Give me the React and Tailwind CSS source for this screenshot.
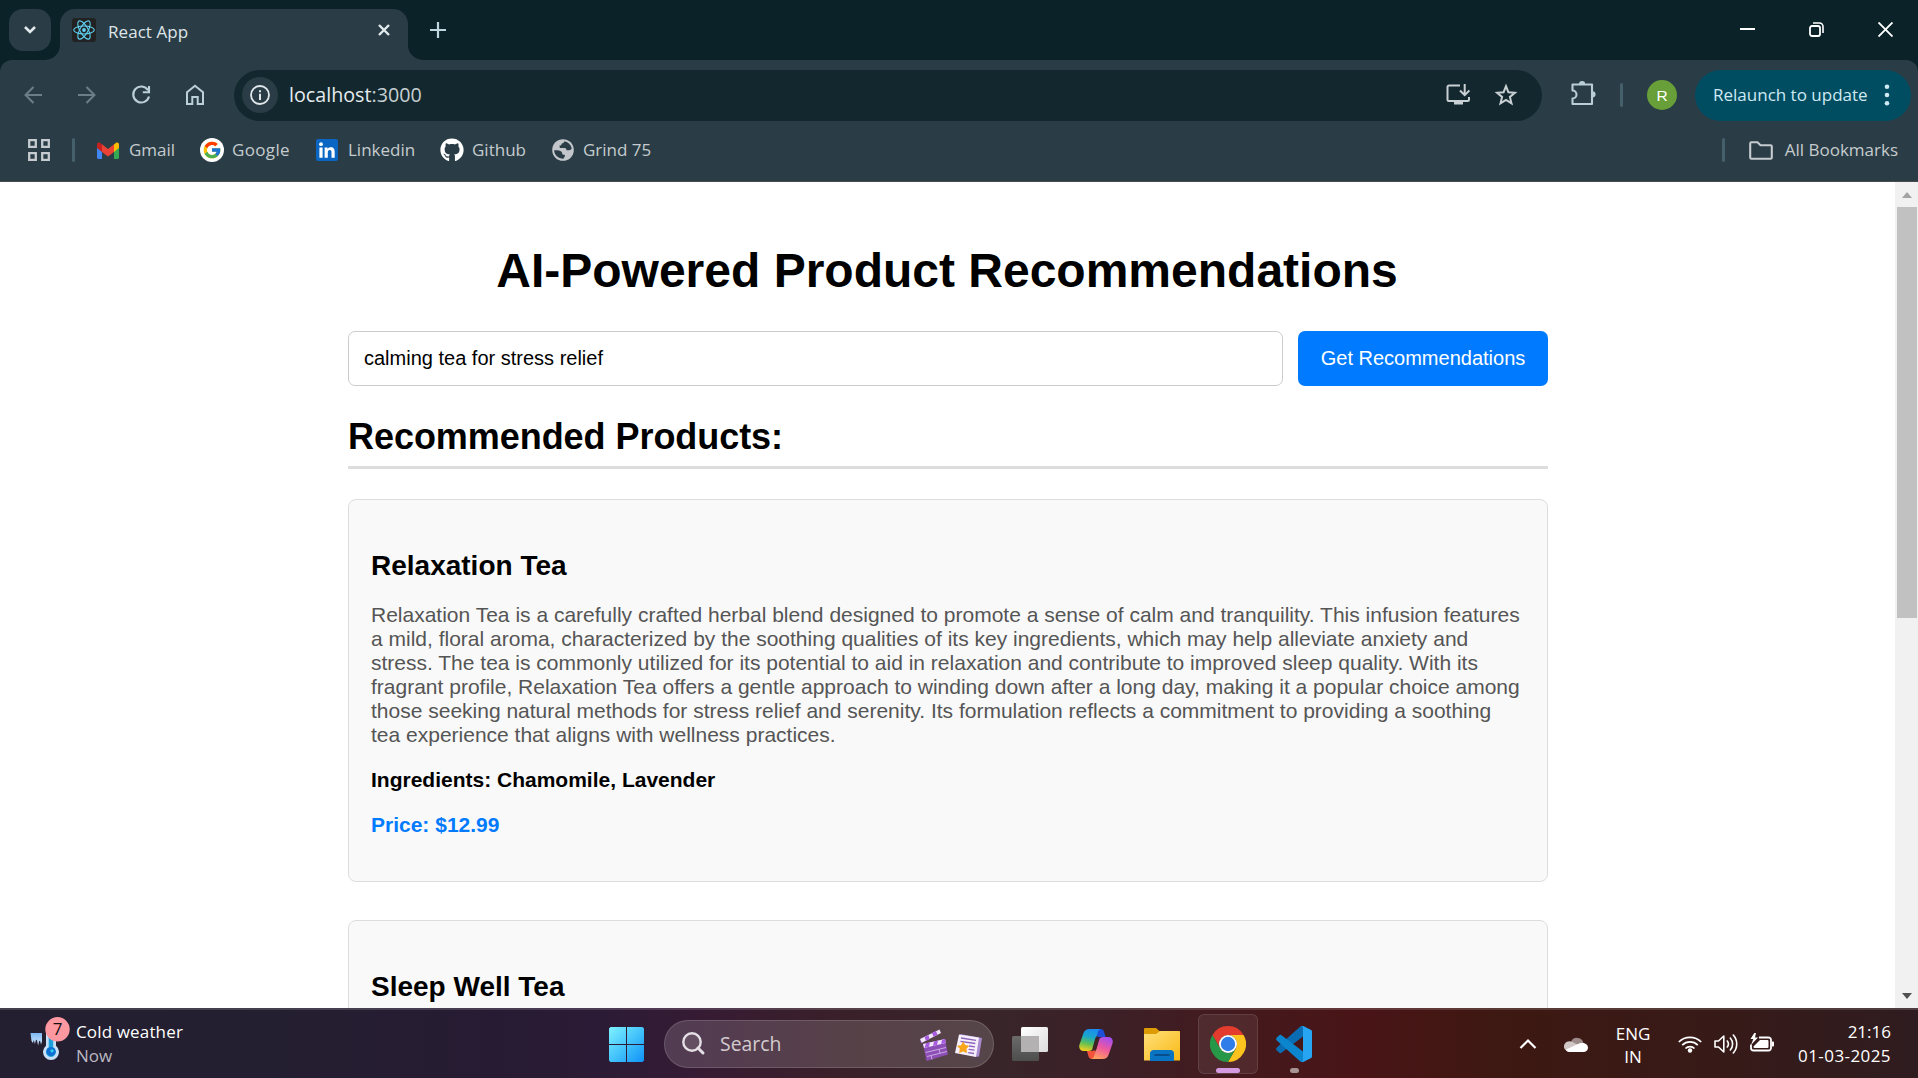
import React from 'react';
import { FcGoogle } from 'react-icons/fc';
import { FaGithub } from 'react-icons/fa';

function Icon({ w = 24, h = 24, className = '', children }) {
  return (
    <svg width={w} height={h} viewBox={`0 0 ${w} ${h}`} fill="none" className={`shrink-0 ${className}`}>
      {children}
    </svg>
  );
}

/* ---------- Browser tab strip ---------- */

function ReactLogo() {
  return (
    <Icon className="rounded-[3px] bg-[#222222]">
      <g stroke="#5ed3f3" strokeWidth="1.1">
        <ellipse cx="12" cy="12" rx="10.3" ry="4" />
        <ellipse cx="12" cy="12" rx="10.3" ry="4" transform="rotate(60 12 12)" />
        <ellipse cx="12" cy="12" rx="10.3" ry="4" transform="rotate(120 12 12)" />
      </g>
      <circle cx="12" cy="12" r="1.9" fill="#5ed3f3" />
    </Icon>
  );
}

function TabStrip() {
  return (
    <div className="flex h-[60px] items-start bg-[#0b2229]">
      <button className="mt-[9px] ml-[9px] flex h-[42px] w-[42px] items-center justify-center rounded-[14px] bg-[#2a3d46]">
        <Icon w={14} h={10}>
          <path d="M2 2l5 5 5-5" stroke="#e3e9ec" strokeWidth="2.6" />
        </Icon>
      </button>
      <div className="relative mt-[9px] ml-[9px] flex h-[51px] w-[348px] items-center rounded-t-[15px] bg-[#2a3d46] pb-[9px] pl-[12px]">
        <Icon w={15} h={15} className="absolute bottom-0 -left-[15px]">
          <path d="M15 0v15H0A15 15 0 0 0 15 0z" fill="#2a3d46" />
        </Icon>
        <Icon w={15} h={15} className="absolute -right-[15px] bottom-0">
          <path d="M0 0v15h15A15 15 0 0 1 0 0z" fill="#2a3d46" />
        </Icon>
        <ReactLogo />
        <span className="mt-[3px] ml-[12px] grow leading-6 tracking-[0.05px] text-[#dfe6e9]">React App</span>
        <Icon w={12} h={12} className="mr-[18px]">
          <path d="M1 1l10 10M11 1L1 11" stroke="#e3e9ec" strokeWidth="2.4" />
        </Icon>
      </div>
      <Icon w={16} h={16} className="mt-[22px] ml-[22px]">
        <path d="M8 0v16M0 8h16" stroke="#bfd6df" strokeWidth="2.2" />
      </Icon>
      <div className="mt-[22px] mr-[25px] ml-auto flex gap-[54px]">
        <Icon w={15} h={15}>
          <path d="M0 7h15" stroke="#fff" strokeWidth="2" />
        </Icon>
        <Icon w={15} h={15}>
          <rect x="1" y="4" width="10" height="10" rx="2" stroke="#fff" strokeWidth="1.8" />
          <path d="M4 1h6.500a3.500 3.500 0 0 1 3.500 3.500V11" stroke="#fff" strokeWidth="1.6" />
        </Icon>
        <Icon w={15} h={15}>
          <path d="M.5.5l14 14M14.500.5l-14 14" stroke="#fff" strokeWidth="1.9" />
        </Icon>
      </div>
    </div>
  );
}

/* ---------- Toolbar ---------- */

function Toolbar() {
  return (
    <div className="flex h-[69px] items-center pt-[1px] pl-[24px]">
      <Icon w={18} h={18}>
        <path d="M18 9H1.500M9.500 1L1.500 9l8 8" stroke="#6c7f88" strokeWidth="2" />
      </Icon>
      <Icon w={18} h={18} className="ml-[36px]">
        <path d="M0 9h16.500M8.500 1l8 8-8 8" stroke="#6c7f88" strokeWidth="2" />
      </Icon>
      <Icon w={20} h={20} className="ml-[35px]">
        <path d="M17 5.200A8 8 0 1 0 18 11.500" stroke="#bcd0d9" strokeWidth="2.1" />
        <path d="M18 1v6.200h-6.200" stroke="#bcd0d9" strokeWidth="2.1" />
      </Icon>
      <Icon w={20} h={22} className="ml-[34px]">
        <path d="M2 8.200L10 1.700l8 6.500V20h-5.300v-7H7.300v7H2z" stroke="#bcd0d9" strokeWidth="2" />
      </Icon>
      <div className="ml-[29px] flex h-[51px] w-[1308px] items-center rounded-full bg-[#13282e] pr-[24px] pl-[8px]">
        <div className="flex h-9 w-9 items-center justify-center rounded-full bg-[#2a3d46]">
          <Icon w={20} h={20}>
            <circle cx="10" cy="10" r="9" stroke="#e1e7ea" strokeWidth="1.8" />
            <path d="M10 8.800V15M10 5.200v2" stroke="#e1e7ea" strokeWidth="2" />
          </Icon>
        </div>
        <span className="-mt-[1px] ml-[11px] grow text-[19.7px] leading-7 text-[#e6ecee]">
          localhost<span className="text-[#c7cfd2]">:3000</span>
        </span>
        <Icon w={24} h={22}>
          <path d="M14 1.500H3A1.500 1.500 0 0 0 1.500 3v12.500A1.500 1.500 0 0 0 3 17h18.500a1.500 1.500 0 0 0 1.500-1.500V13" stroke="#c9d0d3" strokeWidth="2" />
          <path d="M8 17.500h9V20.500H8z" fill="#c9d0d3" />
          <path d="M18.700 0v11M14 6.500l4.700 4.700 4.700-4.700" stroke="#c9d0d3" strokeWidth="2" />
        </Icon>
        <Icon w={24} h={24} className="ml-[24px]">
          <path d="M12 3.200l2.400 6 6.500.5-5 4.200 1.600 6.400L12 16.900l-5.500 3.400 1.600-6.400-5-4.200 6.500-.5z" stroke="#c9d0d3" strokeWidth="2" />
        </Icon>
      </div>
      <Icon w={26} h={26} className="-mt-[4px] ml-[28px]">
        <path d="M2.500 4.500h19.500v19.500H2.500v-5.500a4 4 0 0 0 0-8z" stroke="#b9ced7" strokeWidth="2.1" strokeLinejoin="round" />
        <path d="M9 4a3.100 3.100 0 0 1 6.200 0zM22.500 11.200a3 3 0 0 1 0 6.200z" fill="#b9ced7" />
      </Icon>
      <div className="ml-[24px] h-6 w-[3px] rounded-full bg-[#46606b]" />
      <div className="ml-[24px] flex h-[30px] w-[30px] items-center justify-center rounded-full bg-[#689f38] pt-px font-['Liberation_Sans',Arial,sans-serif] text-[15.5px] text-white">
        R
      </div>
      <div className="ml-[18px] flex h-[51px] w-[216px] items-center rounded-full bg-[#004d61] pl-[18px]">
        <span className="leading-6 whitespace-nowrap text-[#cfe9f3]">Relaunch to update</span>
        <Icon w={6} h={22} className="mr-[21px] ml-auto">
          <g fill="#cfe9f3">
            <circle cx="3" cy="2.700" r="2.300" />
            <circle cx="3" cy="11" r="2.300" />
            <circle cx="3" cy="19.300" r="2.300" />
          </g>
        </Icon>
      </div>
    </div>
  );
}

/* ---------- Bookmarks ---------- */

function GmailLogo() {
  return (
    <Icon w={22} h={17}>
      <path d="M0 3v12.500A1.500 1.500 0 0 0 1.500 17H5V7z" fill="#4285f4" />
      <path d="M22 3v12.500a1.500 1.500 0 0 1-1.500 1.500H17V7z" fill="#34a853" />
      <path d="M17 2.500l2-1.700c1.300-1 3 0 3 1.600V6l-5 4z" fill="#fbbc04" />
      <path d="M0 2.400C0 .8 1.700-.2 3 .8l2 1.700V10L0 6z" fill="#c5221f" />
      <path d="M5 2.300l6 4.600 6-4.600V10l-6 4.600L5 10z" fill="#ea4335" />
    </Icon>
  );
}

function LinkedinLogo() {
  return (
    <Icon w={22} h={22} className="rounded-[2px] bg-[#0a66c2]">
      <g fill="#fff">
        <circle cx="5" cy="5.200" r="1.900" />
        <path d="M3.400 8.400h3.200V18.700H3.400zM8.600 8.400h3v1.500c.6-1 1.700-1.700 3.100-1.700 3.200 0 4 2 4 5v5.500h-3.200v-5c0-1.400-.2-2.600-1.700-2.600s-2 1.100-2 2.600v5H8.600z" />
      </g>
    </Icon>
  );
}

function GlobeIcon() {
  return (
    <Icon w={22} h={22}>
      <circle cx="11" cy="11" r="10.800" fill="#c3c7cc" />
      <path d="M12.500 2.200c-.2 1.300-1.200 2-2.700 2.200-.3 1.500-1 2.100-2.300 2.200L7.800 9h4.700c1.500.1 2 1 2 2.300h2.600c1.300 0 2-.8 2.600-1.700C19.300 6 16.300 3 12.500 2.200zM2.200 11.200c2.800-.1 5.600 0 7.300 1.600.8.9.6 2.200 1.200 2.700.8.5 2.300.1 2.300 1.200 0 1.200-1.300 1.700-1.600 3C6.500 19.800 2.200 16.200 2.200 11.200z" fill="#2a3d46" />
    </Icon>
  );
}

function Bookmark({ icon, label, className }) {
  return (
    <div className={`flex items-center ${className}`}>
      {icon}
      <span className="leading-6 text-[#c5cbce]">{label}</span>
    </div>
  );
}

function BookmarksBar() {
  return (
    <div className="flex h-[53px] items-center border-b border-[#4a4a4d] pb-[10px] pl-[28px]">
      <Icon w={22} h={22}>
        <path d="M1.200 1.200h6.600v6.600H1.200zM14.200 1.200h6.600v6.600h-6.600zM1.200 14.200h6.600v6.600H1.200zM14.200 14.200h6.600v6.600h-6.600z" stroke="#c5cbce" strokeWidth="2.300" />
      </Icon>
      <div className="ml-[22px] h-6 w-[3px] rounded-full bg-[#46606b]" />
      <Bookmark className="ml-[22px] w-[103px] gap-[10px]" icon={<GmailLogo />} label="Gmail" />
      <Bookmark
        className="w-[116px] gap-[8px]"
        icon={
          <span className="flex h-6 w-6 items-center justify-center rounded-full bg-white">
            <FcGoogle size={20} />
          </span>
        }
        label={<span className="tracking-[0.35px]">Google</span>}
      />
      <Bookmark className="w-[124px] gap-[10px]" icon={<LinkedinLogo />} label="Linkedin" />
      <Bookmark className="w-[112px] gap-[8px]" icon={<FaGithub size={24} color="#fff" />} label="Github" />
      <Bookmark className="gap-[9px]" icon={<GlobeIcon />} label="Grind 75" />
      <div className="ml-auto h-6 w-[3px] rounded-full bg-[#46606b]" />
      <Icon w={24} h={19} className="ml-[24px]">
        <path d="M1.200 2.500c0-.8.500-1.300 1.300-1.300H8.500l3 3h10c.8 0 1.300.5 1.300 1.300v11c0 .8-.5 1.300-1.300 1.300H2.500c-.8 0-1.300-.5-1.300-1.300z" stroke="#c5cbce" strokeWidth="2.100" />
      </Icon>
      <span className="mr-[20px] ml-[12px] leading-6 text-[#c5cbce]">All Bookmarks</span>
    </div>
  );
}

/* ---------- Page ---------- */

function ProductCard({ name, description, ingredients, price }) {
  return (
    <article className="mb-[38px] rounded-[8px] border border-[#dddddd] bg-[#f9f9f9] px-[22px] pt-[50px] pb-[44px] text-[21px] leading-6">
      <h3 className="mb-[21px] text-[28px] leading-8 font-bold">{name}</h3>
      <p className="mb-[21px] text-[#555555]">{description}</p>
      <p className="mb-[21px] font-bold">Ingredients: {ingredients}</p>
      <p className="font-bold text-[#007bff]">Price: {price}</p>
    </article>
  );
}

const products = [
  {
    name: 'Relaxation Tea',
    description:
      'Relaxation Tea is a carefully crafted herbal blend designed to promote a sense of calm and tranquility. This infusion features a mild, floral aroma, characterized by the soothing qualities of its key ingredients, which may help alleviate anxiety and stress. The tea is commonly utilized for its potential to aid in relaxation and contribute to improved sleep quality. With its fragrant profile, Relaxation Tea offers a gentle approach to winding down after a long day, making it a popular choice among those seeking natural methods for stress relief and serenity. Its formulation reflects a commitment to providing a soothing tea experience that aligns with wellness practices.',
    ingredients: 'Chamomile, Lavender',
    price: '$12.99',
  },
];

function Page() {
  return (
    <div className="flex h-[826px] bg-white">
      <main className="grow overflow-hidden pl-[348px] font-['Liberation_Sans',Arial,sans-serif] text-black">
        <div className="w-[1200px]">
          <h1 className="mt-[61px] pr-[2px] text-center text-[48px] leading-[55px] font-bold">AI-Powered Product Recommendations</h1>
          <div className="mt-[33px] flex h-[55px] gap-[15px] text-[20px]">
            <div className="flex grow items-center rounded-[7px] border border-[#cccccc] pb-[2px] pl-[15px]">calming tea for stress relief</div>
            <button className="w-[250px] rounded-[7px] bg-[#007bff] pb-[2px] text-white">Get Recommendations</button>
          </div>
          <h2 className="mt-[30px] mb-[30px] border-b-[3px] border-[#dddddd] pb-[9px] text-[36px] leading-[41px] font-bold tracking-[-0.05px]">
            Recommended Products:
          </h2>
          {products.map((p) => (
            <ProductCard key={p.name} {...p} />
          ))}
          <article className="h-[383px] rounded-[8px] border border-[#dddddd] bg-[#f9f9f9] px-[22px] pt-[50px]">
            <h3 className="text-[28px] leading-8 font-bold">Sleep Well Tea</h3>
          </article>
        </div>
      </main>
      <div className="flex w-[23px] flex-col items-center bg-[#f1f1f1]">
        <Icon w={10} h={6} className="mt-[10px] mb-[9px]">
          <path d="M5 0l5 6H0z" fill="#a3a3a3" />
        </Icon>
        <div className="h-[411px] w-[20px] bg-[#c1c1c1]" />
        <Icon w={10} h={6} className="mt-auto mb-[9px]">
          <path d="M0 0h10L5 6z" fill="#505050" />
        </Icon>
      </div>
    </div>
  );
}

/* ---------- Taskbar ---------- */

function Weather() {
  return (
    <div className="flex w-[579px] items-start pl-[30px]">
      <Icon w={40} h={46} className="mt-[7px]">
        <defs>
          <linearGradient id="ice" x1="0" y1="0" x2="0" y2="1">
            <stop stopColor="#7db7f3" />
            <stop offset="1" stopColor="#d5e8fb" />
          </linearGradient>
        </defs>
        <path d="M.5 16h11.500v8.500l-1 3-1-4-1 1-.9 4-1.300-6-1 1-.9 3.500-1-4-1 3-1.400-2z" fill="url(#ice)" />
        <path d="M16 14h10v14.700a8 8 0 1 1-10 0z" fill="#c7dff7" />
        <path d="M18.700 14h4.500v16.500a5 5 0 1 1-4.500 0z" fill="#1ba2dc" />
        <circle cx="21" cy="34.500" r="4.600" fill="#0f6fd0" />
        <circle cx="22" cy="33.800" r="1.600" fill="#2fd0f0" />
        <circle cx="27.500" cy="12.300" r="12.200" fill="#fd98a1" />
        <text x="27.500" y="18.200" textAnchor="middle" fontSize="17" fontFamily="Open Sans" fill="#111">7</text>
      </Icon>
      <div className="mt-[10px] ml-[6px] leading-6">
        <div className="tracking-[0.15px] text-white">Cold weather</div>
        <div className="text-[#b9b8c0]">Now</div>
      </div>
    </div>
  );
}

function SearchBox() {
  return (
    <div className="mr-[18px] ml-[20px] flex h-[48px] w-[330px] items-center rounded-full border border-white/15 bg-white/15 pr-[10px] pl-[17px]">
      <Icon w={24} h={24}>
        <circle cx="10" cy="10" r="8.700" stroke="#e4dfe4" strokeWidth="2.400" fill="#fff" fillOpacity=".1" />
        <path d="M16 16l5 5" stroke="#e4dfe4" strokeWidth="3" strokeLinecap="round" />
      </Icon>
      <span className="ml-[14px] grow text-[19.4px] leading-7 text-[#d2cccf]">Search</span>
      <Icon w={30} h={34} className="mt-[2px]">
        <path d="M1 11L20.500 1.500l1.500 3.500L2.500 15z" fill="#f2e6fc" />
        <path d="M5.500 9l4-2 1 4-3.500 2zM13 5l4-2 1.500 3.800-4 2zM1 11l2 4-.8.300z" fill="#a75be0" />
        <path d="M4 16l22-5 3 15.500L7.500 33z" fill="#8d4fb5" />
        <path d="M4 16l22-5 .7 4L5 20z" fill="#f2e6fc" />
        <path d="M7 15.300l4-1-1 4.500-4.500 1zM15 13.500l4-1-1 4.500-4 1zM23 11.700l3-.7.700 4-4.500 1z" fill="#a75be0" />
        <path d="M6.500 24.500l20.500-5M8 28.500l20-5M20 21.300l1 4M12 27.500l1 4" stroke="#c9a9e3" strokeWidth="1" />
      </Icon>
      <Icon w={28} h={28} className="mt-[3px] ml-[6px]">
        <path d="M5 2l22 4-3 18.500-4 .500z" fill="#a98bd0" />
        <path d="M4 2.500l20 3-3 19.500-21-4z" fill="#f5eefb" />
        <path d="M6 6l15 2.300M5.500 9.300l14.800 2.200M14 14l6 .9M13.700 17.300l5.800.9M13.200 20.600l5.800.9" stroke="#8b63b8" strokeWidth="1.300" />
        <path d="M8.200 10.500l1.600 3 3.400.500-2.400 2.600.500 3.700-3.200-1.500-3.300 1.500.7-3.600-2.500-2.500 3.500-.4z" fill="#f9a51a" stroke="#f9a51a" strokeWidth="1.200" strokeLinejoin="round" />
      </Icon>
    </div>
  );
}

function StartIcon() {
  return (
    <Icon w={35} h={35}>
      <defs>
        <linearGradient id="win" gradientUnits="userSpaceOnUse" x1="0" y1="0" x2="35" y2="35">
          <stop stopColor="#7ff2ff" />
          <stop offset=".5" stopColor="#45c4fb" />
          <stop offset="1" stopColor="#0f92f7" />
        </linearGradient>
      </defs>
      <path d="M1.500 0H17v17H0V1.500zM18 0h15.500L35 1.500V17H18zM0 18h17v17H1.500L0 33.500zM18 18h17v15.500L33.500 35H18z" fill="url(#win)" />
    </Icon>
  );
}

function TaskViewIcon() {
  return (
    <Icon w={36} h={34}>
      <defs>
        <linearGradient id="tvFront" x1="0" y1="0" x2="1" y2="1">
          <stop stopColor="#fff" />
          <stop offset="1" stopColor="#dcdcdc" />
        </linearGradient>
        <linearGradient id="tvBack" x1="0" y1="0" x2="0" y2="1">
          <stop stopColor="#6b6b6b" />
          <stop offset="1" stopColor="#4d4d4d" />
        </linearGradient>
      </defs>
      <rect x="0" y="9" width="27" height="25" rx="1.500" fill="url(#tvBack)" />
      <rect x="9" y="0" width="27" height="25" rx="1.500" fill="url(#tvFront)" />
      <path d="M9 9h18v16H9z" fill="#b3b1b1" />
    </Icon>
  );
}

function CopilotIcon() {
  return (
    <Icon w={34} h={32}>
      <defs>
        <linearGradient id="cpL" x1="0.500" y1="0" x2="0.300" y2="1">
          <stop stopColor="#1b8df0" />
          <stop offset=".35" stopColor="#1aa6c8" />
          <stop offset=".65" stopColor="#5cbf57" />
          <stop offset="1" stopColor="#f6cf1c" />
        </linearGradient>
        <linearGradient id="cpR" x1="0.700" y1="0" x2="0.300" y2="1">
          <stop stopColor="#a54df0" />
          <stop offset=".5" stopColor="#ee5a9c" />
          <stop offset="1" stopColor="#ffa05e" />
        </linearGradient>
      </defs>
      <path d="M17 1h4.500c2 0 3 1 3.500 2.800L26.700 9H22c-2.500 0-3.500 1.500-4.200 3.500z" fill="#1d4fd8" />
      <path d="M17 31h-4c-2 0-3-1-3.500-2.800L8 23h4.500c2.500 0 3-1.500 3.800-3.500z" fill="#f4523b" />
      <path d="M10.500 1H22c-2 .3-2.800 2-3.400 4L14 20c-.8 2.300-2 3-4.200 3H5c-4 0-5.500-3-4.500-6.500L4.300 5.500C5.300 2.500 7.300 1 10.500 1z" fill="url(#cpL)" />
      <path d="M23.500 31H12c2-.3 2.800-2 3.400-4L20 12c.8-2.300 2-3 4.200-3H29c4 0 5.500 3 4.500 6.500l-3.800 11c-1 3-3 4.500-6.200 4.500z" fill="url(#cpR)" />
      <path d="M18.300 10.500L15.500 20.500" stroke="#3d2326" strokeWidth="4" strokeLinecap="round" />
    </Icon>
  );
}

function FolderIcon() {
  return (
    <Icon w={36} h={33}>
      <defs>
        <linearGradient id="fold" x1="0" y1="0" x2="1" y2="1">
          <stop stopColor="#ffe07a" />
          <stop offset="1" stopColor="#f9b916" />
        </linearGradient>
      </defs>
      <path d="M0 1.200C0 .5.500 0 1.200 0H11c1 0 1.500.3 2.200 1L16 3.500V9H0z" fill="#dd9b05" />
      <path d="M0 6h10.500c1.500 0 2.500-.5 3.500-1.500.8-.9 1.500-1.500 3-1.500h18c.6 0 1 .4 1 1v28.500H0z" fill="url(#fold)" />
      <path d="M6 33v-7.500C6 23.500 7.500 22 9.500 22h17c2 0 3.500 1.500 3.500 3.500V33z" fill="#0a74c4" />
      <path d="M11 27h14" stroke="#084d8c" strokeWidth="1.800" strokeLinecap="round" />
    </Icon>
  );
}

function ChromeIcon() {
  return (
    <Icon w={36} h={36}>
      <path d="M2.410 9A18 18 0 0 1 33.590 9H18a9 9 0 0 0-7.790 13.500z" fill="#e33b2e" />
      <path d="M33.590 9A18 18 0 0 1 18 36l7.790-13.500A9 9 0 0 0 18 9z" fill="#fcc31e" />
      <path d="M18 36A18 18 0 0 1 2.410 9l7.800 13.500a9 9 0 0 0 15.580 0z" fill="#279847" />
      <circle cx="18" cy="18" r="9" fill="#fff" />
      <circle cx="18" cy="18" r="7.200" fill="#2f7de9" />
    </Icon>
  );
}

function VsCodeIcon() {
  return (
    <Icon w={36} h={36}>
      <path d="M27 0v10.500L5.500 26.800c-.8.500-1.500.5-2.200 0L.8 24.600c-1-.9-1-2.100 0-3L24 .8C25 0 26 0 27 0z" fill="#0a6db3" />
      <path d="M27 36V25.500L5.500 9.200c-.8-.5-1.500-.5-2.200 0L.8 11.400c-1 .9-1 2.100 0 3L24 35.200c1 .8 2 .8 3 .8z" fill="#0c85cf" />
      <path d="M25.500 35.700c.8.400 1.500.3 2.200 0l7-3.400c.8-.4 1.300-1 1.300-2V5.700c0-1-.5-1.600-1.300-2l-7-3.400c-.7-.3-1.400-.4-2.200 0 .9 0 1.500.7 1.500 1.800v31.800c0 1.100-.6 1.800-1.500 1.800z" fill="#27a5f2" />
    </Icon>
  );
}

function Tray() {
  return (
    <div className="mr-[27px] ml-auto flex items-center text-white">
      <Icon w={18} h={12}>
        <path d="M1.500 10L9 2.500l7.500 7.500" stroke="#fff" strokeWidth="2.200" />
      </Icon>
      <Icon w={24} h={16} className="ml-[27px]">
        <path d="M7 6a6.500 6.500 0 0 1 12.500 1.500L12 11z" fill="#9d8b89" />
        <path d="M5 15.500A5 5 0 0 1 1 7.500c1.500-2.500 5-3 7.500-1.500L16 10z" fill="#d0c7c6" />
        <path d="M2 13.500L14 8c1-.5 2.300-1 4-1 3.500 0 6 2 6 4.800 0 2.400-2 4.200-4.500 4.200H5c-1.200 0-2.300-.8-3-2.500z" fill="#fff" />
      </Icon>
      <div className="mt-[2px] ml-[27px] w-[36px] text-center leading-[23px]">
        <div>ENG</div>
        <div>IN</div>
      </div>
      <Icon w={24} h={18} className="ml-[27px]">
        <g stroke="#fff" strokeWidth="1.700">
          <path d="M.8 7a15.800 15.800 0 0 1 22.400 0M4.200 10.200a11 11 0 0 1 15.600 0M7.500 13.500a6.400 6.400 0 0 1 9 0" />
        </g>
        <circle cx="12" cy="15.500" r="2.200" fill="#fff" />
      </Icon>
      <Icon w={24} h={20} className="ml-[12px]">
        <g stroke="#fff" strokeWidth="1.600" strokeLinejoin="round" strokeLinecap="round">
          <path d="M1 7h3.500L9.800 2v16l-5.300-5H1z" />
          <path d="M13.300 7a5 5 0 0 1 0 6M16.300 4a9 9 0 0 1 0 12M19.300 1a13.500 13.500 0 0 1 0 18" />
        </g>
      </Icon>
      <Icon w={24} h={20} className="mb-[2px] ml-[12px]">
        <path d="M9 4.500h9.500a2.500 2.500 0 0 1 2.500 2.500v8a2.500 2.500 0 0 1-2.500 2.500h-15A2.500 2.500 0 0 1 1 15v-3.500" stroke="#fff" strokeWidth="1.800" />
        <path d="M22 8.500h1.200c.5 0 .8.300.8.800v3.400c0 .5-.3.800-.8.800H22z" fill="#fff" />
        <path d="M10 7H17.500a1 1 0 0 1 1 1v6a1 1 0 0 1-1 1H4.500a1 1 0 0 1-1-1v-.5z" fill="#fff" />
        <path d="M4.500-.3L.5 6h2.800L1 12l7-7.500H5L6-.3z" fill="#fff" />
      </Icon>
      <div className="ml-[24px] text-right leading-6">
        <div>21:16</div>
        <div className="tracking-[0.42px]">01-03-2025</div>
      </div>
    </div>
  );
}

function Taskbar() {
  return (
    <div className="flex h-[70px] border-t-2 border-white/15 bg-[linear-gradient(90deg,#231f30_0%,#241f30_14%,#271b33_26%,#2d1b36_32%,#371b33_37%,#3a2029_44%,#38252a_52%,#3c2027_58%,#431a1e_64%,#491416_71%,#3e1812_78%,#381a17_88%,#2f1c20_100%)]">
      <Weather />
      <div className="flex items-center">
        <div className="flex items-center">
          <div className="w-[30px]" />
          <StartIcon />
          <SearchBox />
          <TaskViewIcon />
          <span className="w-[31px]" />
          <CopilotIcon />
          <span className="w-[31px]" />
          <FolderIcon />
        </div>
        <div className="ml-[18px] flex h-[60px] w-[60px] flex-col items-center rounded-[6px] border border-white/10 bg-white/[0.07] pt-[11px]">
          <ChromeIcon />
          <div className="mt-[6px] h-[5px] w-6 rounded-full bg-[#d59be2]" />
        </div>
        <div className="ml-[18px] flex h-[60px] flex-col items-center pt-[12px]">
          <VsCodeIcon />
          <div className="mt-[6px] h-[5px] w-[9px] rounded-full bg-[#a89494]" />
        </div>
      </div>
      <Tray />
    </div>
  );
}

export default function App() {
  return (
    <div className="h-[1078px] w-[1918px] overflow-hidden bg-[#0b2229] font-['Open_Sans','Noto_Sans',sans-serif] text-[17px]">
      <TabStrip />
      <div className="rounded-t-[12px] bg-[#2a3d46]">
        <Toolbar />
        <BookmarksBar />
      </div>
      <Page />
      <Taskbar />
    </div>
  );
}
